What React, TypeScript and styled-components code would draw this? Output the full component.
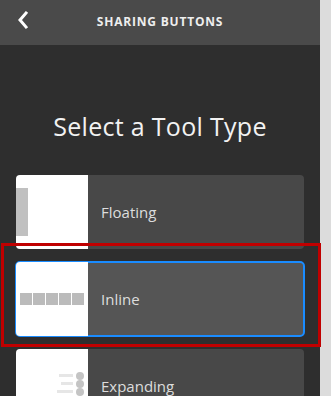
import React from 'react';
import styled, { createGlobalStyle } from 'styled-components';

const GlobalStyle = createGlobalStyle`
  html, body {
    margin: 0;
    padding: 0;
    background: #dcdcdc;
  }
  body {
    font-family: 'Open Sans', 'Noto Sans', sans-serif;
  }
`;

const Page = styled.div`
  display: flex;
  width: 331px;
  height: 396px;
  overflow: hidden;
`;

const Panel = styled.div`
  position: relative;
  width: 320px;
  height: 396px;
  background: #2e2e2e;
  display: flex;
  flex-direction: column;
`;

const Strip = styled.div`
  flex: 1;
  background: #dcdcdc;
`;

const Header = styled.div`
  height: 45px;
  flex-shrink: 0;
  background: #4a4a4a;
  display: flex;
  align-items: center;
  justify-content: center;
  position: relative;
`;

const BackButton = styled.button`
  position: absolute;
  left: 12px;
  top: 9px;
  width: 22px;
  height: 22px;
  padding: 0;
  border: none;
  background: none;
  display: flex;
  align-items: center;
  justify-content: center;
  cursor: pointer;
`;

const HeaderTitle = styled.div`
  color: #eeeeee;
  font-size: 12px;
  font-weight: 700;
  letter-spacing: 0.8px;
  margin-top: -3px;
`;

const Body = styled.div`
  padding: 64px 16px 0;
  display: flex;
  flex-direction: column;
`;

const Title = styled.h1`
  margin: 0 0 31px;
  text-align: center;
  color: #f2f2f2;
  font-size: 25px;
  font-weight: 400;
  letter-spacing: 0.3px;
  line-height: 35px;
`;

const Card = styled.div<{ $selected?: boolean }>`
  display: flex;
  height: 74px;
  margin-bottom: 13px;
  border-radius: 4px;
  overflow: hidden;
  background: ${(p) => (p.$selected ? '#555555' : '#484848')};
  outline: ${(p) => (p.$selected ? '2px solid #1a8cff' : 'none')};
  outline-offset: -1px;
  flex-shrink: 0;
`;

const Thumb = styled.div`
  width: 72px;
  background: #ffffff;
  position: relative;
  display: flex;
  align-items: center;
`;

const CardLabel = styled.div`
  display: flex;
  align-items: center;
  padding-left: 13px;
  color: #dddddd;
  font-size: 15px;
`;

const FloatBar = styled.div`
  width: 12px;
  height: 48px;
  background: #c0c0c0;
`;

const InlineRow = styled.div`
  display: flex;
  gap: 1px;
  margin-left: 4px;
`;

const InlineSquare = styled.div`
  width: 12px;
  height: 12px;
  background: #bbbbbb;
`;

const Highlight = styled.div`
  position: absolute;
  left: 1px;
  top: 243px;
  width: 320px;
  height: 104px;
  box-sizing: border-box;
  border: 3px solid #c00000;
  pointer-events: none;
`;

const Expanding = () => (
  <svg width="72" height="74" viewBox="0 0 72 74" style={{ display: 'block' }}>
    <rect x="43" y="25" width="14" height="3" fill="#e6e6e6" />
    <rect x="45" y="33" width="12" height="3" fill="#e6e6e6" />
    <rect x="41" y="41" width="16" height="3" fill="#e6e6e6" />
    <circle cx="64" cy="27" r="4" fill="#c4c4c4" />
    <circle cx="64" cy="35" r="4" fill="#c4c4c4" />
    <circle cx="64" cy="43" r="4" fill="#c4c4c4" />
  </svg>
);

export default function App() {
  return (
    <>
      <GlobalStyle />
      <Page>
        <Panel>
          <Header>
            <BackButton aria-label="Back">
              <svg width="14" height="20" viewBox="0 0 14 20">
                <path d="M10 3 L4 10 L10 17" fill="none" stroke="#ffffff" strokeWidth="3" strokeLinecap="square" />
              </svg>
            </BackButton>
            <HeaderTitle>SHARING BUTTONS</HeaderTitle>
          </Header>
          <Body>
            <Title>Select a Tool Type</Title>
            <Card>
              <Thumb>
                <FloatBar />
              </Thumb>
              <CardLabel>Floating</CardLabel>
            </Card>
            <Card $selected>
              <Thumb>
                <InlineRow>
                  {[0, 1, 2, 3, 4].map((i) => (
                    <InlineSquare key={i} />
                  ))}
                </InlineRow>
              </Thumb>
              <CardLabel>Inline</CardLabel>
            </Card>
            <Card>
              <Thumb>
                <Expanding />
              </Thumb>
              <CardLabel>Expanding</CardLabel>
            </Card>
          </Body>
          <Highlight />
        </Panel>
        <Strip />
      </Page>
    </>
  );
}
